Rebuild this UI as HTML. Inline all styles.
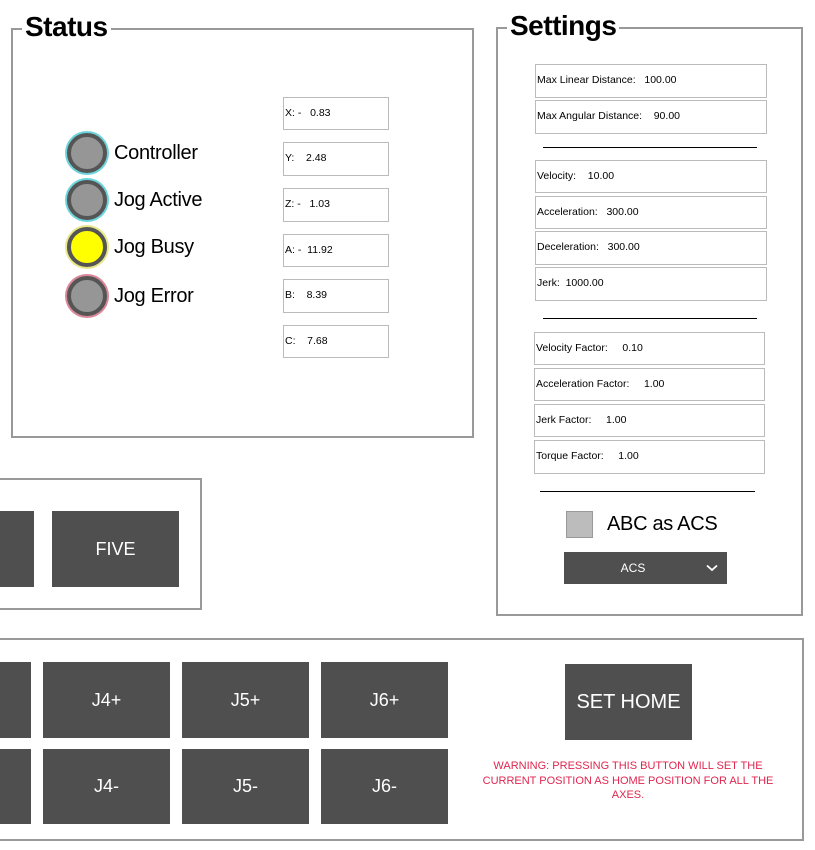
<!DOCTYPE html>
<html><head><meta charset="utf-8"><style>
*{margin:0;padding:0;box-sizing:border-box}
body{width:815px;height:850px;background:#fff;position:relative;overflow:hidden;font-family:"Liberation Sans","DejaVu Sans",sans-serif;color:#000}
.a{position:absolute}
.box{position:absolute;border:2px solid #999}
.title{position:absolute;background:#fff;font-weight:bold;font-size:28px;padding:0 3px;line-height:30px;letter-spacing:-0.5px}
.f{position:absolute;border:1px solid #bbb;font-size:10.5px;line-height:30px;padding-left:1px;white-space:pre;background:#fff}
.led{position:absolute;width:40px;height:40px;border-radius:50%;border:4px solid #555;background:#969696}
.lbl{position:absolute;font-size:20px;line-height:24px;letter-spacing:-0.3px}
.btn{position:absolute;background:#4f4f4f;color:#fff;font-size:18px;display:flex;align-items:center;justify-content:center}
.hr{position:absolute;height:1px;background:#000}
</style></head><body>
<div class="box" style="left:11px;top:28px;width:463px;height:410px"></div>
<div class="title" style="left:22px;top:12px">Status</div>
<div class="led" style="left:67px;top:133px;box-shadow:0 0 0 2px #6cd4dc"></div>
<div class="led" style="left:67px;top:180px;box-shadow:0 0 0 2px #6cd4dc"></div>
<div class="led" style="left:67px;top:227px;background:#ffff00;box-shadow:0 0 0 2px #e8e88a"></div>
<div class="led" style="left:67px;top:276px;box-shadow:0 0 0 2px #d9879a"></div>
<div class="lbl" style="left:114px;top:141px">Controller</div>
<div class="lbl" style="left:114px;top:188px">Jog Active</div>
<div class="lbl" style="left:114px;top:235px">Jog Busy</div>
<div class="lbl" style="left:114px;top:284px">Jog Error</div>
<div class="f" style="left:283px;top:97px;width:106px;height:33px">X: -   0.83</div>
<div class="f" style="left:283px;top:142px;width:106px;height:34px">Y:    2.48</div>
<div class="f" style="left:283px;top:188px;width:106px;height:34px">Z: -   1.03</div>
<div class="f" style="left:283px;top:234px;width:106px;height:33px">A: -  11.92</div>
<div class="f" style="left:283px;top:279px;width:106px;height:34px">B:    8.39</div>
<div class="f" style="left:283px;top:325px;width:106px;height:33px">C:    7.68</div>

<div class="box" style="left:496px;top:27px;width:307px;height:589px"></div>
<div class="title" style="left:507px;top:11px">Settings</div>
<div class="f" style="left:535px;top:64px;width:232px;height:34px">Max Linear Distance:   100.00</div>
<div class="f" style="left:535px;top:100px;width:232px;height:34px">Max Angular Distance:    90.00</div>
<div class="hr" style="left:543px;top:147px;width:214px"></div>
<div class="f" style="left:535px;top:160px;width:232px;height:33px">Velocity:    10.00</div>
<div class="f" style="left:535px;top:196px;width:232px;height:33px">Acceleration:   300.00</div>
<div class="f" style="left:535px;top:231px;width:232px;height:34px">Deceleration:   300.00</div>
<div class="f" style="left:535px;top:267px;width:232px;height:34px">Jerk:  1000.00</div>
<div class="hr" style="left:543px;top:318px;width:214px"></div>
<div class="f" style="left:534px;top:332px;width:231px;height:33px">Velocity Factor:     0.10</div>
<div class="f" style="left:534px;top:368px;width:231px;height:33px">Acceleration Factor:     1.00</div>
<div class="f" style="left:534px;top:404px;width:231px;height:33px">Jerk Factor:     1.00</div>
<div class="f" style="left:534px;top:440px;width:231px;height:34px">Torque Factor:     1.00</div>
<div class="hr" style="left:540px;top:491px;width:215px"></div>
<div class="a" style="left:566px;top:511px;width:27px;height:27px;background:#bcbcbc;border:1px solid #999"></div>
<div class="lbl" style="left:607px;top:512px">ABC as ACS</div>
<div class="btn" style="left:564px;top:552px;width:163px;height:32px;font-size:12px"><span style="margin-right:25px">ACS</span>
<svg class="a" style="right:9px;top:12px" width="12" height="8" viewBox="0 0 12 8"><path d="M1 1.5L6 6L11 1.5" stroke="#fff" stroke-width="1.8" fill="none"/></svg></div>

<div class="box" style="left:-10px;top:478px;width:212px;height:132px"></div>
<div class="btn" style="left:0;top:511px;width:34px;height:76px"></div>
<div class="btn" style="left:52px;top:511px;width:127px;height:76px">FIVE</div>

<div class="box" style="left:-10px;top:638px;width:814px;height:203px"></div>
<div class="btn" style="left:0;top:662px;width:31px;height:76px"></div>
<div class="btn" style="left:43px;top:662px;width:127px;height:76px">J4+</div>
<div class="btn" style="left:182px;top:662px;width:127px;height:76px">J5+</div>
<div class="btn" style="left:321px;top:662px;width:127px;height:76px">J6+</div>
<div class="btn" style="left:0;top:749px;width:31px;height:75px"></div>
<div class="btn" style="left:43px;top:749px;width:127px;height:75px">J4-</div>
<div class="btn" style="left:182px;top:749px;width:127px;height:75px">J5-</div>
<div class="btn" style="left:321px;top:749px;width:127px;height:75px">J6-</div>
<div class="btn" style="left:565px;top:664px;width:127px;height:76px;font-size:20px">SET HOME</div>
<div class="a" style="left:478px;top:759px;width:300px;text-align:center;color:#e0264f;font-size:11px;line-height:14.5px">WARNING: PRESSING THIS BUTTON WILL SET THE CURRENT POSITION AS HOME POSITION FOR ALL THE AXES.</div>
</body></html>
